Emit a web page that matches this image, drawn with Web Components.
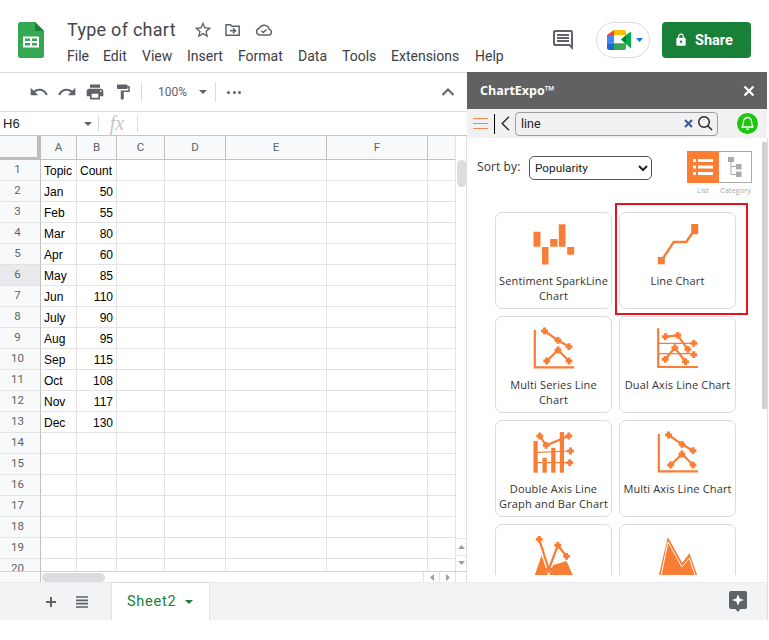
<!DOCTYPE html>
<html lang="en"><head><meta charset="utf-8"><title>Type of chart</title>
<style>
html,body{margin:0;padding:0;background:#fff;font-family:Roboto,"Liberation Sans",sans-serif}
sheet-app{display:block;width:769px;height:620px}
</style></head><body>
<sheet-app></sheet-app>
<script>
const ORANGE='#f97d35';
const P={
star:'M22 9.24l-7.19-.62L12 2 9.19 8.63 2 9.24l5.46 4.73L5.82 21 12 17.27 18.18 21l-1.63-7.03L22 9.24zM12 15.4l-3.76 2.27 1-4.28-3.32-2.88 4.38-.38L12 6.1l1.71 4.04 4.38.38-3.32 2.88 1 4.28L12 15.4z',
undo:'M12.5 8c-2.65 0-5.05.99-6.9 2.6L2 7v9h9l-3.62-3.62c1.39-1.16 3.16-1.88 5.12-1.88 3.54 0 6.55 2.31 7.6 5.5l2.37-.78C21.08 11.03 17.15 8 12.5 8z',
redo:'M18.4 10.6C16.55 8.99 14.15 8 11.5 8c-4.65 0-8.58 3.03-9.96 7.22L3.9 16c1.05-3.19 4.05-5.5 7.6-5.5 1.95 0 3.73.72 5.12 1.88L13 16h9V7l-3.6 3.6z',
print:'M19 8H5c-1.66 0-3 1.34-3 3v6h4v4h12v-4h4v-6c0-1.66-1.34-3-3-3zm-3 11H8v-5h8v5zm3-7c-.55 0-1-.45-1-1s.45-1 1-1 1 .45 1 1-.45 1-1 1zm-1-9H6v4h12V3z',
paint:'M18 4V3c0-.55-.45-1-1-1H5c-.55 0-1 .45-1 1v4c0 .55.45 1 1 1h12c.55 0 1-.45 1-1V6h1v4H9v11c0 .55.45 1 1 1h2c.55 0 1-.45 1-1v-9h8V4h-3z',
comment:'M21.99 4c0-1.1-.89-2-1.99-2H4c-1.1 0-2 .9-2 2v12c0 1.1.9 2 2 2h14l4 4-.01-18zM20 4v13.17L18.83 16H4V4h16zM6 12h12v2H6zm0-3h12v2H6zm0-3h12v2H6z',
lock:'M18 8h-1V6c0-2.76-2.24-5-5-5S7 3.24 7 6v2H6c-1.1 0-2 .9-2 2v10c0 1.1.9 2 2 2h12c1.1 0 2-.9 2-2V10c0-1.1-.9-2-2-2zm-6 9c-1.1 0-2-.9-2-2s.9-2 2-2 2 .9 2 2-.9 2-2 2zm3.1-9H8.9V6c0-1.71 1.39-3.1 3.1-3.1 1.71 0 3.1 1.39 3.1 3.1v2z'
};
const mi=(d,s,c)=>`<svg width="${s}" height="${s}" viewBox="0 0 24 24" fill="${c}" aria-hidden="true"><path d="${d}"/></svg>`;
const plus=(x,y,r=3.4)=>`M${x-r} ${y}H${x+r}M${x} ${y-r}V${y+r}`;

class BaseEl extends HTMLElement{
  render(html){ if(!this.shadowRoot) this.attachShadow({mode:'open'}); this.shadowRoot.innerHTML=html; }
}

class DocHeader extends BaseEl{connectedCallback(){
  const menu=[['File',36],['Edit',39],['View',45],['Insert',51],['Format',60],['Data',44],['Tools',49],['Extensions',84],['Help',30]];
  this.render(`<style>
  :host{display:flex;height:72px;box-sizing:border-box;background:#fff;align-items:flex-start;color:#3c4043}
  .logo{margin:22px 0 0 18px;width:26px;height:36px;flex:none}
  .mid{margin-left:23px;flex:none;width:480px;padding-top:18px}
  .t{display:flex;align-items:center;height:24px}
  .title{font:18px/24px Roboto,sans-serif;color:#444746;width:125px;letter-spacing:.27px}
  .t svg{flex:none}
  .menu{display:flex;margin-top:3px;font:14px/22px Roboto,sans-serif;color:#3c4043}
  .menu span{display:block;white-space:nowrap}
  .right{margin-left:auto;display:flex;align-items:center;height:36px;margin-top:22px;margin-right:18px}
  .pill{width:54px;height:36px;box-sizing:border-box;border:1px solid #dadce0;border-radius:18px;display:flex;align-items:center;padding-left:10px;margin:0 12px 0 21px;gap:5px}
  .share{width:89px;height:36px;background:#188038;border-radius:4px;color:#fff;font:700 14.500px/36px Roboto,sans-serif;display:flex;align-items:center;padding-left:12px;box-sizing:border-box;gap:7px}
  .share span{padding-top:1px}
  </style>
  <svg class="logo" viewBox="0 0 26 36"><path d="M2.5 0H17l9 9v24.500a2.500 2.500 0 0 1-2.500 2.500h-21A2.500 2.500 0 0 1 0 33.500V2.500A2.500 2.500 0 0 1 2.500 0z" fill="#34a853"/><path d="M17 0l9 9h-9z" fill="#188038"/><path d="M5 14.500h16v11H5z" fill="#fff"/><path d="M7 16.500h5v2.500H7zM14 16.500h5v2.500h-5zM7 21h5v2.500H7zM14 21h5v2.500h-5z" fill="#34a853"/></svg>
  <div class="mid">
   <div class="t"><span class="title">Type of chart</span>
    <span style="margin-left:1px;display:flex">${mi(P.star,20,'#5f6368')}</span>
    <svg style="margin-left:11px" width="18" height="18" viewBox="0 0 18 18" fill="none" stroke="#5f6368" stroke-width="1.500"><path d="M2 3.800h4.500l1.500 1.500h7.200v9H2z"/><path d="M6 9.800h5M9 7.300l2.500 2.500L9 12.300"/></svg>
    <svg style="margin-left:13px" width="18" height="16" viewBox="0 0 18 16" fill="none" stroke="#5f6368" stroke-width="1.400"><path d="M4.500 13h9a3 3 0 0 0 .6-5.900A5.200 5.200 0 0 0 4.300 6.300 3.400 3.400 0 0 0 4.500 13z"/><path d="M6.500 8.800l1.800 1.800 3.300-3.200"/></svg>
   </div>
   <div class="menu">${menu.map(([m,w])=>`<span style="width:${w}px">${m}</span>`).join('')}</div>
  </div>
  <div class="right">
   ${mi(P.comment,24,'#5f6368')}
   <div class="pill">
    <svg width="24" height="20" viewBox="0 0 24 20" style="flex:none"><path d="M7 0v5H0z" fill="#ea4335"/><path d="M0 5h7v8.300H0z" fill="#4285f4"/><path d="M0 13.300h7V20H2a2 2 0 0 1-2-2z" fill="#1967d2"/><path d="M7 0h10a2 2 0 0 1 2 2v3H7z" fill="#fbbc04"/><path d="M7 13.300h12V18a2 2 0 0 1-2 2H7z" fill="#34a853"/><path d="M14 9.500L19 5v9z" fill="#00832d"/><path d="M19 5l5-3.500V18.500L19 14z" fill="#00ac47"/></svg>
    <svg width="7" height="4" viewBox="0 0 7 4" style="flex:none"><path d="M0 0h7L3.500 4z" fill="#1a73e8"/></svg>
   </div>
   <div class="share">${mi(P.lock,14,'#fff')}<span>Share</span></div>
  </div>`);
}}

class SheetToolbar extends BaseEl{connectedCallback(){
  this.render(`<style>
  :host{display:flex;align-items:center;height:40px;box-sizing:border-box;border-top:1px solid #dadce0;border-bottom:1px solid #dadce0;color:#5f6368;padding-left:25px;background:#fff}
  .i{width:28px;display:flex;justify-content:center;flex:none}
  .sep{width:1px;height:20px;background:#dadce0;flex:none}
  .z{font:12px Roboto,sans-serif;color:#5f6368;margin-left:16px;width:37px}
  .c{width:0;height:0;border:4px solid transparent;border-top:4px solid #5f6368;border-bottom:0;margin-left:4px}
  .dots{margin-left:11px;display:flex;gap:2.500px}.dots b{width:3px;height:3px;border-radius:50%;background:#5f6368}
  .up{margin-left:auto;margin-right:11px;display:flex}
  </style>
  <span class="i">${mi(P.undo,20,'#5f6368')}</span><span class="i">${mi(P.redo,20,'#5f6368')}</span><span class="i">${mi(P.print,20,'#5f6368')}</span><span class="i">${mi(P.paint,18,'#5f6368')}</span>
  <span class="sep" style="margin-left:4px"></span><span class="z">100%</span><span class="c"></span><span class="sep" style="margin-left:8px"></span>
  <span class="dots"><b></b><b></b><b></b></span>
  <span class="up"><svg width="16" height="16" viewBox="0 0 16 16" fill="none" stroke="#5f6368" stroke-width="2"><path d="M2.500 11L8 5.500 13.500 11"/></svg></span>`);
}}

class FormulaBar extends BaseEl{connectedCallback(){
  this.render(`<style>
  :host{display:flex;align-items:center;height:24px;box-sizing:border-box;border-bottom:1px solid #c4c7c5;background:#fff}
  .n{font:13px "Liberation Sans",sans-serif;color:#202124;width:84px;padding-left:3px;box-sizing:border-box}
  .c{width:0;height:0;border:4px solid transparent;border-top:4px solid #5f6368;border-bottom:0}
  .sep{width:1px;height:17px;background:#dadce0}
  .fx{font:italic 20px "Liberation Serif",serif;color:#c4c7c5;width:38px;text-align:center;padding-right:2px;box-sizing:border-box}
  </style><span class="n">H6</span><span class="c"></span><span class="sep" style="margin-left:6px"></span><span class="fx">fx</span><span class="sep"></span>`);
}}

class SheetGrid extends BaseEl{connectedCallback(){
  const cols=[['A',36],['B',40],['C',48],['D',61],['E',101],['F',101],['',28]];
  const d=[['Topic','Count'],['Jan',50],['Feb',55],['Mar',80],['Apr',60],['May',85],['Jun',110],['July',90],['Aug',95],['Sep',115],['Oct',108],['Nov',117],['Dec',130]];
  let h=`<div class="hd corner"></div>`+cols.map(c=>`<div class="hd">${c[0]}</div>`).join('');
  for(let r=1;r<=20;r++){
    h+=`<div class="rh${r===6?' sel':''}">${r}</div>`;
    const row=d[r-1]||[];
    cols.forEach((c,i)=>{
      const v=row[i]; const num=typeof v==='number';
      h+=`<div class="cell${num?' num':''}">${v===undefined?'':v}</div>`;
    });
  }
  this.render(`<style>
  :host{display:flex;height:446px;background:#fff;overflow:hidden;flex-direction:column}
  .top{display:flex;height:435px;flex:none}
  .g{display:grid;width:455px;flex:none;grid-template-columns:41px ${cols.map(c=>c[1]+'px').join(' ')};grid-template-rows:24px;grid-auto-rows:21px;overflow:hidden;font:12px "Liberation Sans",sans-serif;color:#000;align-content:start;height:435px}
  .g>div{box-sizing:border-box;border-right:1px solid #e2e3e3;border-bottom:1px solid #e2e3e3;white-space:nowrap;overflow:hidden}
  .hd{background:#f8f9fa;border-color:#c0c0c0 !important;font:11.500px/22px Roboto,sans-serif;color:#5f6368;text-align:center}
  .corner{border-right:4px solid #bdbdbd !important;border-bottom:3px solid #bdbdbd !important}
  .rh{background:#f8f9fa;border-right-color:#c0c0c0 !important;font:11.500px/19px Roboto,sans-serif;color:#5f6368;text-align:center;padding-right:5px}
  .rh.sel{background:#e8eaed}
  .cell{line-height:22px;padding:0 3px}
  .num{text-align:right}
  .vs{width:12px;box-sizing:border-box;border-right:1px solid #e0e0e0;border-left:1px solid #e2e3e3;display:flex;flex-direction:column;align-items:center;padding-top:24px;background:#fff}
  .thumb{width:9px;height:27px;border-radius:5px;background:#dadce0;flex:none}
  .ar{margin-top:auto;width:100%;height:33px;display:flex;flex-direction:column}
  .ar i{display:flex;flex:1;align-items:center;justify-content:center;border-top:1px solid #e2e3e3}
  .hs{display:flex;height:11px;flex:none;border-top:1px solid #d0d0d0;box-sizing:border-box;align-items:center;background:#fff}
  .hs .l{width:41px;height:100%;background:#f8f9fa;box-sizing:border-box;border-right:1px solid #c0c0c0;flex:none}
  .hs .th{width:63px;height:9px;border-radius:5px;background:#dadce0;margin-left:1px}
  .hs .b{width:16px;height:100%;display:flex;align-items:center;justify-content:center;border-left:1px solid #e2e3e3;box-sizing:border-box;flex:none}
  .hs .e{width:12px;height:100%;border-left:1px solid #e2e3e3;border-right:1px solid #e0e0e0;box-sizing:border-box;flex:none}
  </style>
  <div class="top"><div class="g">${h}</div>
   <div class="vs"><div class="thumb"></div><div class="ar">
     <i><svg width="7" height="4" viewBox="0 0 7 4"><path d="M0 4h7L3.500 0z" fill="#9aa0a6"/></svg></i>
     <i><svg width="7" height="4" viewBox="0 0 7 4"><path d="M0 0h7L3.500 4z" fill="#9aa0a6"/></svg></i></div></div></div>
  <div class="hs"><div class="l"></div><div class="th"></div><span style="flex:1"></span>
    <span class="b"><svg width="4" height="7" viewBox="0 0 4 7"><path d="M4 0v7L0 3.500z" fill="#9aa0a6"/></svg></span>
    <span class="b"><svg width="4" height="7" viewBox="0 0 4 7"><path d="M0 0v7l4-3.500z" fill="#9aa0a6"/></svg></span>
    <span class="e"></span></div>`);
}}

class ChartCard extends BaseEl{connectedCallback(){
  this.render(`<style>
  :host{display:block;width:117px;height:97px;box-sizing:border-box;border:1px solid #dcdcdc;border-radius:7px;background:#fff;text-align:center;padding-top:9px}
  .ic{display:block;width:44px;height:44px;margin:0 auto}
  .ic ::slotted(svg){display:block}
  .l{margin-top:7px;font:11px/15px "Open Sans","Noto Sans",sans-serif;color:#333;letter-spacing:.15px;white-space:pre-line;padding:0 2px}
  </style><span class="ic"><slot name="icon"></slot></span><div class="l">${this.getAttribute('label')}</div>`);
}}

class ChartPanel extends BaseEl{connectedCallback(){
  const svg=inner=>`<svg slot="icon" width="44" height="44" viewBox="0 0 44 44" fill="none" stroke="${ORANGE}">${inner}</svg>`;
  const pl=a=>`<path stroke-width="3" d="${a.map(p=>plus(p[0],p[1])).join('')}"/>`;
  const multi=svg(`<path stroke-width="2.200" d="M2.800 4V41.300H42"/><path stroke-width="2.200" d="M12.500 5L26 14.300 37 20.700M14.700 35L26 24 37 35"/>${pl([[12.500,5],[26,14.300],[37,20.700],[14.700,35],[26,24],[37,35]])}`);
  const cards=[
   ['Sentiment SparkLine\nChart',svg(`<g fill="${ORANGE}" stroke="none"><rect x="1.500" y="9.700" width="7" height="15"/><rect x="10" y="25" width="6.500" height="17.500"/><rect x="18.200" y="17" width="7.300" height="7.700"/><rect x="26.800" y="2.300" width="6.700" height="22.400"/><rect x="35.200" y="25" width="7" height="7.700"/></g>`)],
   ['Line Chart',svg(`<path stroke-width="2.400" d="M5.500 38.300L17.800 20H30.200L38.800 7.300"/><g fill="${ORANGE}" stroke="none"><rect x="1.800" y="35" width="7" height="7.300"/><rect x="35.200" y="2" width="7" height="10.300"/></g>`)],
   ['Multi Series Line\nChart',multi],
   ['Dual Axis Line Chart',svg(`<path stroke-width="2.200" d="M2.200 2.300V41H42"/><path stroke-width="1.200" d="M2.200 17.300H37M2.200 27.700H37"/><path stroke-width="2.200" d="M9.500 10.700L21.800 9.300 31.800 23.300M9.200 33.300L18.800 21.700 29.500 35.700"/>${pl([[9.500,10.700],[21.800,9.300],[31.800,23.300],[37.800,17.300],[37.800,28.700],[9.200,33.300],[18.800,21.700],[29.500,35.700]])}`)],
   ['Double Axis Line\nGraph and Bar Chart',svg(`<g fill="${ORANGE}" stroke="none"><rect x="1.500" y="11" width="4.200" height="31.700"/><rect x="10.500" y="27.700" width="4.300" height="15"/><rect x="19.200" y="17.700" width="4.300" height="25"/><rect x="27.800" y="2" width="4.200" height="40.700"/></g><path stroke-width="1.200" d="M1.500 22.700L38 21M1.500 32.700H38"/><path stroke-width="2.200" d="M7.800 6L14.200 15.300 36.800 6"/>${pl([[7.800,6],[14.200,15.300],[36.800,6],[38.500,21],[37.800,32.700]])}`)],
   ['Multi Axis Line Chart',multi],
   ['',svg(`<path fill="${ORANGE}" stroke="none" d="M1.800 44L10 20.300 17 32 25 30 34.500 27 42 44z"/><path stroke="#fff" stroke-width="5" d="M7.200 5.300L16.800 35.300 25.800 11.300 34.500 22.300"/><path stroke-width="2.200" d="M7.200 5.300L16.800 35.300 25.800 11.300 34.500 22.300"/>${pl([[7.200,5.300],[16.800,35.300],[25.800,11.300],[34.500,22.300]])}`)],
   ['',svg(`<path fill="${ORANGE}" stroke="none" d="M2.200 44L11.800 3 26.200 28.700 33.500 19.300 42.200 44z"/><path stroke="#fff" stroke-width="1" d="M4.500 44L12 8 26 33 33.300 24 40 44"/>`)]
  ];
  this.render(`<style>
  :host{display:flex;flex-direction:column;width:301px;flex:none;height:510px;background:#fff;font-family:"Open Sans",sans-serif}
  .hd{height:37px;width:300px;background:#616161;color:#fff;display:flex;align-items:center;justify-content:space-between;padding:0 12px 0 13px;box-sizing:border-box;flex:none}
  .hd b{font:700 12.500px "Open Sans",sans-serif}
  .bar{height:29px;width:300px;background:#f1f1f1;display:flex;align-items:center;flex:none}
  .ham{margin-left:6px;flex:none}
  .vl{width:1px;height:20px;background:#000;margin-left:6px;flex:none}
  .sb{margin-left:5px;width:203px;height:24px;box-sizing:border-box;border:1px solid #9e9e9e;border-radius:4px;display:flex;align-items:center;padding:0 4px 1px 5px;font:12.500px Roboto,sans-serif;color:#222;background:#f1f1f1;flex:none}
  .sb span{flex:1}
  .bell{margin-left:19px;flex:none}
  .bw{flex:1;min-height:0;display:flex;border-right:1px solid #ddd;padding-bottom:7px}
  .body{flex:1;overflow:hidden;position:relative;padding-left:28px}
  .sort{display:flex;align-items:flex-start;height:74px;margin-left:-18px;box-sizing:border-box;padding-top:14px}
  .sort label{font:12px/30px "Open Sans",sans-serif;color:#333;width:52px;flex:none;letter-spacing:.1px}
  select{width:123px;height:24px;margin:4px 0 0;border:1px solid #555;border-radius:5px;background:#fff;font:11.800px Roboto,sans-serif;color:#222;padding-left:1px;flex:none}
  .tg{display:grid;grid-template-columns:32px 33px;margin:-1px 0 0 35px;grid-template-rows:32px 13px;flex:none}
  .tg .on{background:#fd7e32;display:flex;align-items:center;justify-content:center}
  .tg .off{border:1px solid #aaa;border-left:0;box-sizing:border-box;display:flex;align-items:center;justify-content:center}
  .tg small{font:7.500px/14px "Open Sans",sans-serif;color:#aaa;text-align:center}
  .cards{display:grid;grid-template-columns:117px 117px;column-gap:7px;row-gap:7px}
  .red{position:absolute;left:148px;top:65px;width:133px;height:112px;box-sizing:border-box;border:2px solid #e8141c;pointer-events:none}
  .scroll{position:absolute;right:0;top:4px;width:5px;height:267px;background:#d2d2d2}
  </style>
  <div class="hd"><b>ChartExpo™</b><svg width="12" height="12" viewBox="0 0 12 12" stroke="#fff" stroke-width="2.200"><path d="M1.500 1.500l9 9M10.500 1.500l-9 9"/></svg></div>
  <div class="bar">
   <svg class="ham" width="15" height="11" viewBox="0 0 15 11" stroke="#f08a5a" stroke-width="1"><path d="M0 .5h15M0 5.500h15M0 10.500h15"/></svg>
   <span class="vl"></span>
   <svg style="margin-left:6px;flex:none" width="9" height="15" viewBox="0 0 9 15" fill="none" stroke="#222" stroke-width="1.300"><path d="M8 .8L1.200 7.500 8 14.200"/></svg>
   <div class="sb"><span>line</span>
     <svg width="9" height="9" viewBox="0 0 9 9" stroke="#3b5998" stroke-width="2"><path d="M1 1l7 7M8 1L1 8"/></svg>
     <svg style="margin-left:4px" width="16" height="16" viewBox="0 0 16 16" fill="none" stroke="#222" stroke-width="1.400"><circle cx="7" cy="7" r="5.300"/><path d="M10.800 10.800L15 15"/></svg></div>
   <svg class="bell" width="21" height="21" viewBox="0 0 21 21"><circle cx="10.500" cy="10.500" r="10.500" fill="#1ec40f"/><path d="M10.500 4.500a4 4 0 0 0-4 4c0 3.800-1.500 5-1.500 5.500h11c0-.5-1.500-1.700-1.500-5.500a4 4 0 0 0-4-4z" fill="none" stroke="#fff" stroke-width="1.300"/><path d="M9 15.500a1.500 1.500 0 0 0 3 0z" fill="#fff"/></svg>
  </div>
  <div class="bw"><div class="body">
   <div class="sort"><label>Sort by:</label>
    <select aria-label="Sort by"><option>Popularity</option></select>
    <div class="tg">
     <div class="on"><svg width="20" height="16" viewBox="0 0 20 16" fill="#fff"><path d="M0 0h3v3H0zM5 0h15v3H5zM0 6.500h3v3H0zM5 6.500h15v3H5zM0 13h3v3H0zM5 13h15v3H5z"/></svg></div>
     <div class="off"><svg width="14" height="20" viewBox="0 0 14 20"><path d="M3 5v12.500h5M3 9.500h5" fill="none" stroke="#aaa"/><path d="M0 0h6v5H0zM8 7h5.500v5.500H8zM8 14.500h5.500V20H8z" fill="#aaa"/></svg></div>
     <small>List</small><small>Category</small>
    </div></div>
   <div class="cards">${cards.map(c=>`<chart-card label="${c[0]}">${c[1]}</chart-card>`).join('')}</div>
   <div class="red"></div>
   <div class="scroll"></div>
  </div></div>`);
}}

class TabBar extends BaseEl{connectedCallback(){
  this.render(`<style>
  :host{display:flex;height:38px;background:#f1f3f4;align-items:center;flex:none;width:768px;border-top:1px solid #e8eaed;border-right:1px solid #ddd;box-sizing:border-box}
  .tab{height:100%;width:97px;background:#fff;box-shadow:0 0 2px rgba(60,64,67,.3);display:flex;align-items:center;margin-left:24px;padding-left:15px;box-sizing:border-box;font:400 14.500px Roboto,sans-serif;color:#188038;letter-spacing:.75px;flex:none}
  .c{width:0;height:0;border:4px solid transparent;border-top:4px solid #188038;border-bottom:0;margin-left:9px}
  .ex{margin-left:auto;margin-right:20px;display:flex}
  </style>
  <svg style="margin-left:45px" width="12" height="12" viewBox="0 0 12 12" stroke="#5f6368" stroke-width="2"><path d="M6 1v10M1 6h10"/></svg>
  <svg style="margin-left:19px" width="12" height="12" viewBox="0 0 12 12" stroke="#5f6368"><path d="M0 1h12M0 4.300h12M0 7.700h12M0 11h12" stroke-width="1.700"/></svg>
  <div class="tab">Sheet2<span class="c"></span></div>
  <span class="ex"><svg width="18" height="21" viewBox="0 0 18 21"><path d="M2 0h14a2 2 0 0 1 2 2v14a2 2 0 0 1-2 2h-4.500L9 21l-2.500-3H2a2 2 0 0 1-2-2V2a2 2 0 0 1 2-2z" fill="#5f6368"/><path d="M9 3.500l1.700 4 4.300 1.500-4.300 1.500-1.700 4-1.700-4L3 9l4.300-1.500z" fill="#fff"/></svg></span>`);
}}

class SheetApp extends BaseEl{connectedCallback(){
  this.render(`<style>
  :host{display:flex;flex-direction:column}
  .main{display:flex;height:510px;flex:none}
  .left{width:467px;flex:none;display:flex;flex-direction:column}
  </style>
  <doc-header></doc-header>
  <div class="main"><div class="left"><sheet-toolbar></sheet-toolbar><formula-bar></formula-bar><sheet-grid></sheet-grid></div><chart-panel></chart-panel></div>
  <tab-bar></tab-bar>`);
}}
customElements.define('doc-header',DocHeader);
customElements.define('sheet-toolbar',SheetToolbar);
customElements.define('formula-bar',FormulaBar);
customElements.define('sheet-grid',SheetGrid);
customElements.define('chart-card',ChartCard);
customElements.define('chart-panel',ChartPanel);
customElements.define('tab-bar',TabBar);
customElements.define('sheet-app',SheetApp);
</script></body></html>
